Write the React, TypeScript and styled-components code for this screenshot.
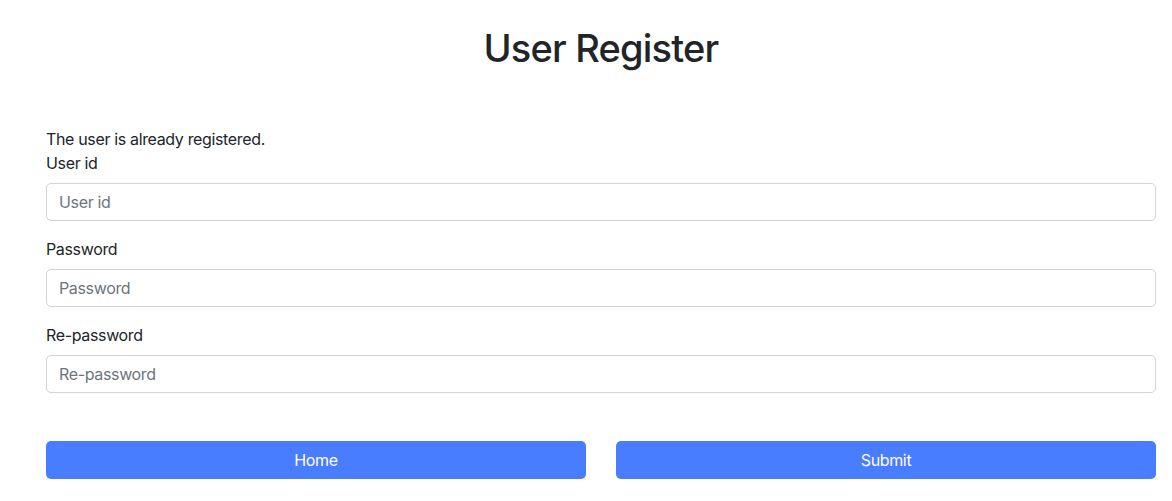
import styled, { createGlobalStyle } from 'styled-components';

const GlobalStyle = createGlobalStyle`
  *, *::before, *::after {
    box-sizing: border-box;
  }
  body {
    margin: 0;
    background: #fff;
    color: #212529;
    font-family: Inter, "Noto Sans", "Liberation Sans", sans-serif;
    font-size: 16px;
    line-height: 1.5;
  }
`;

const Page = styled.main`
  padding: 26px 16px 0 46px;
`;

const Title = styled.h1`
  margin: 0 0 55px;
  text-align: center;
  font-size: 38px;
  font-weight: 500;
  line-height: 1.2;
  letter-spacing: -0.8px;
`;

const Notice = styled.p`
  margin: 0;
  letter-spacing: -0.35px;
`;

const Form = styled.form`
  display: flex;
  flex-direction: column;
`;

const Group = styled.div`
  margin-bottom: 16px;
`;

const Label = styled.label`
  display: block;
  margin-bottom: 8px;
  letter-spacing: -0.35px;
`;

const Input = styled.input`
  display: block;
  width: 100%;
  height: 38px;
  padding: 6px 12px;
  border: 1px solid #ced4da;
  border-radius: 5px;
  font: inherit;
  letter-spacing: -0.35px;
  color: #212529;

  &::placeholder {
    color: #6c757d;
  }
`;

const Actions = styled.div`
  margin-top: 32px;
  display: grid;
  grid-template-columns: 1fr 1fr;
  gap: 30px;
`;

const Button = styled.button`
  height: 38px;
  border: none;
  border-radius: 5px;
  background: #487dff;
  color: #fff;
  font: inherit;
  letter-spacing: -0.35px;
  cursor: pointer;
`;

const fields = [
  { id: 'userId', label: 'User id', type: 'text' },
  { id: 'password', label: 'Password', type: 'password' },
  { id: 'rePassword', label: 'Re-password', type: 'password' },
];

export default function App() {
  return (
    <>
      <GlobalStyle />
      <Page>
        <Title>User Register</Title>
        <Notice>The user is already registered.</Notice>
        <Form onSubmit={(e) => e.preventDefault()}>
          {fields.map((f) => (
            <Group key={f.id}>
              <Label htmlFor={f.id}>{f.label}</Label>
              <Input id={f.id} type={f.type} placeholder={f.label} />
            </Group>
          ))}
          <Actions>
            <Button type="button">Home</Button>
            <Button type="submit">Submit</Button>
          </Actions>
        </Form>
      </Page>
    </>
  );
}
